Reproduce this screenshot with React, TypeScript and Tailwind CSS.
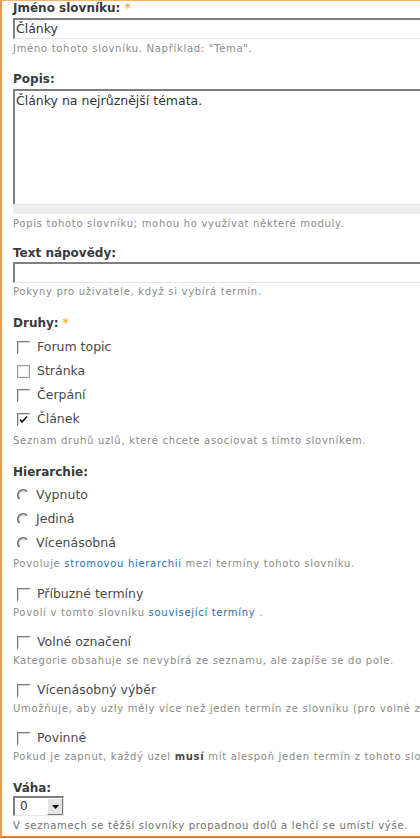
import React from 'react';

const font = { fontFamily: '"DejaVu Sans", Verdana, sans-serif' };

function Star() {
  return <span className="text-[#f5b641] font-bold ml-1">*</span>;
}

function Label({ children, star }: { children: React.ReactNode; star?: boolean }) {
  return (
    <div className="h-[14px] text-[12px] leading-[14px] font-bold text-[#3a3a3a] whitespace-nowrap">
      {children}
      {star && <Star />}
    </div>
  );
}

function Desc({ children, className = '' }: { children: React.ReactNode; className?: string }) {
  return (
    <div className={`h-[14px] text-[10px] leading-[14px] text-[#8a8a8a] tracking-[0.7px] whitespace-nowrap ${className}`}>
      {children}
    </div>
  );
}

// old-school inset checkbox
function Box({ checked, thin }: { checked?: boolean; thin?: boolean }) {
  return (
    <svg width="13" height="13" viewBox="0 0 13 13" className="shrink-0">
      {thin ? (
        <>
          <rect x="0.5" y="0.5" width="12" height="12" fill="#fff" stroke="#9a9a9a" />
          <rect x="1.5" y="1.5" width="10" height="10" fill="none" stroke="#ececec" />
        </>
      ) : (
        <>
          <rect x="0" y="0" width="13" height="13" fill="#fff" />
          <path d="M0 0H13V1H1V13H0Z" fill="#7a7a7a" />
          <path d="M1 1H12V2H2V12H1Z" fill="#d4d4d4" />
        </>
      )}
      {checked && <path d="M3 6.5L5 9L10 3.5" fill="none" stroke="#111" strokeWidth="1.6" />}
    </svg>
  );
}

function Radio() {
  return (
    <svg width="12" height="12" viewBox="0 0 12 12" className="shrink-0">
      <circle cx="6" cy="6" r="5.5" fill="#fff" />
      <path d="M10.2 2.4A5.2 5.2 0 0 0 2.4 10.2" fill="none" stroke="#6e6e6e" strokeWidth="1.5" />
      <path d="M8.8 3.4A3.8 3.8 0 0 0 3.4 8.8" fill="none" stroke="#c4c4c4" strokeWidth="1" />
    </svg>
  );
}

function Option({ children, radio, checked, thin }: { children: React.ReactNode; radio?: boolean; checked?: boolean; thin?: boolean }) {
  return (
    <div className="h-[24px] flex items-center pl-[4px] gap-[7px] text-[12.5px] text-[#494949] whitespace-nowrap">
      {radio ? <Radio /> : <Box checked={checked} thin={thin} />}
      <span>{children}</span>
    </div>
  );
}

function Input({ value, className = '' }: { value?: string; className?: string }) {
  return (
    <div className={`w-[460px] h-[21px] bg-white border-t-2 border-l-2 border-[#7f7f7f] border-b border-r border-b-[#e6e6e6] border-r-[#e6e6e6] text-[12.5px] leading-[18px] text-[#333] pl-[1px] ${className}`}>
      {value}
    </div>
  );
}

const link = 'text-[#1b6fae]';

export default function App() {
  return (
    <div style={font} className="w-[420px] h-[839px] overflow-hidden bg-white">
      <div className="h-[838px] border-l-2 border-t border-b-2 border-l-[#ee9a4d] border-t-[#f3b06e] border-b-[#e6772e] pl-[11px] overflow-hidden">
        {/* Jméno */}
        <Label star>Jméno slovníku:</Label>
        <Input value="Články" className="mt-[3px]" />
        <Desc className="mt-[3px]">Jméno tohoto slovníku. Například: "Téma".</Desc>

        {/* Popis */}
        <div className="mt-[16px]">
          <Label>Popis:</Label>
          <div className="mt-[3px] w-[460px] h-[115px] border-t-2 border-l-2 border-[#7f7f7f] bg-white text-[12.5px] leading-[20px] text-[#333] pl-[1px]">
            Články na nejrůznější témata.
          </div>
          <div className="w-[460px] h-[10px] bg-[#eeeeee] border-t border-[#e2e2e2]" />
          <Desc className="mt-[3px]">Popis tohoto slovníku; mohou ho využívat některé moduly.</Desc>
        </div>

        {/* Text nápovědy */}
        <div className="mt-[15px]">
          <Label>Text nápovědy:</Label>
          <Input className="mt-[2px]" />
          <Desc className="mt-[2px]">Pokyny pro uživatele, když si vybírá termín.</Desc>
        </div>

        {/* Druhy */}
        <div className="mt-[17px]">
          <Label star>Druhy:</Label>
          <div className="mt-[5px]">
            <Option>Forum topic</Option>
            <Option thin>Stránka</Option>
            <Option>Čerpání</Option>
            <Option checked>Článek</Option>
          </div>
          <Desc className="mt-[3px]">Seznam druhů uzlů, které chcete asociovat s tímto slovníkem.</Desc>
        </div>

        {/* Hierarchie */}
        <div className="mt-[17px]">
          <Label>Hierarchie:</Label>
          <div className="mt-[4px]">
            <Option radio>Vypnuto</Option>
            <Option radio>Jediná</Option>
            <Option radio>Vícenásobná</Option>
          </div>
          <Desc className="mt-[2px]">
            Povoluje <span className={link}>stromovou hierarchii</span> mezi termíny tohoto slovníku.
          </Desc>
        </div>

        <div className="mt-[11px]">
          <Option>Příbuzné termíny</Option>
          <Desc>
            Povolí v tomto slovníku <span className={link}>související termíny</span> .
          </Desc>
        </div>

        <div className="mt-[10px]">
          <Option>Volné označení</Option>
          <Desc>Kategorie obsahuje se nevybírá ze seznamu, ale zapíše se do pole.</Desc>
        </div>

        <div className="mt-[10px]">
          <Option>Vícenásobný výběr</Option>
          <Desc>Umožňuje, aby uzly měly více než jeden termín ze slovníku (pro volné značení je to vždy zapnuto).</Desc>
        </div>

        <div className="mt-[10px]">
          <Option>Povinné</Option>
          <Desc>
            Pokud je zapnut, každý uzel <b className="text-[#494949]">musí</b> mít alespoň jeden termín z tohoto slovníku.
          </Desc>
        </div>

        {/* Váha */}
        <div className="mt-[17px]">
          <Label>Váha:</Label>
          <div className="mt-[1px] w-[51px] h-[20px] flex border-t-2 border-l-2 border-[#7f7f7f] border-b border-r border-b-[#e6e6e6] border-r-[#e6e6e6] bg-white">
            <span className="flex-1 pl-[5px] text-[12px] leading-[17px] text-[#333]">0</span>
            <span className="w-[16px] h-[17px] bg-[#e4e4e4] border-t border-l border-white border-b border-r border-b-[#777] border-r-[#777] flex items-center justify-center">
              <svg width="7" height="4" viewBox="0 0 7 4">
                <path d="M0 0H7L3.5 4Z" fill="#000" />
              </svg>
            </span>
          </div>
          <Desc className="mt-[3px] text-[#707070]">V seznamech se těžší slovníky propadnou dolů a lehčí se umístí výše.</Desc>
        </div>
      </div>
    </div>
  );
}
